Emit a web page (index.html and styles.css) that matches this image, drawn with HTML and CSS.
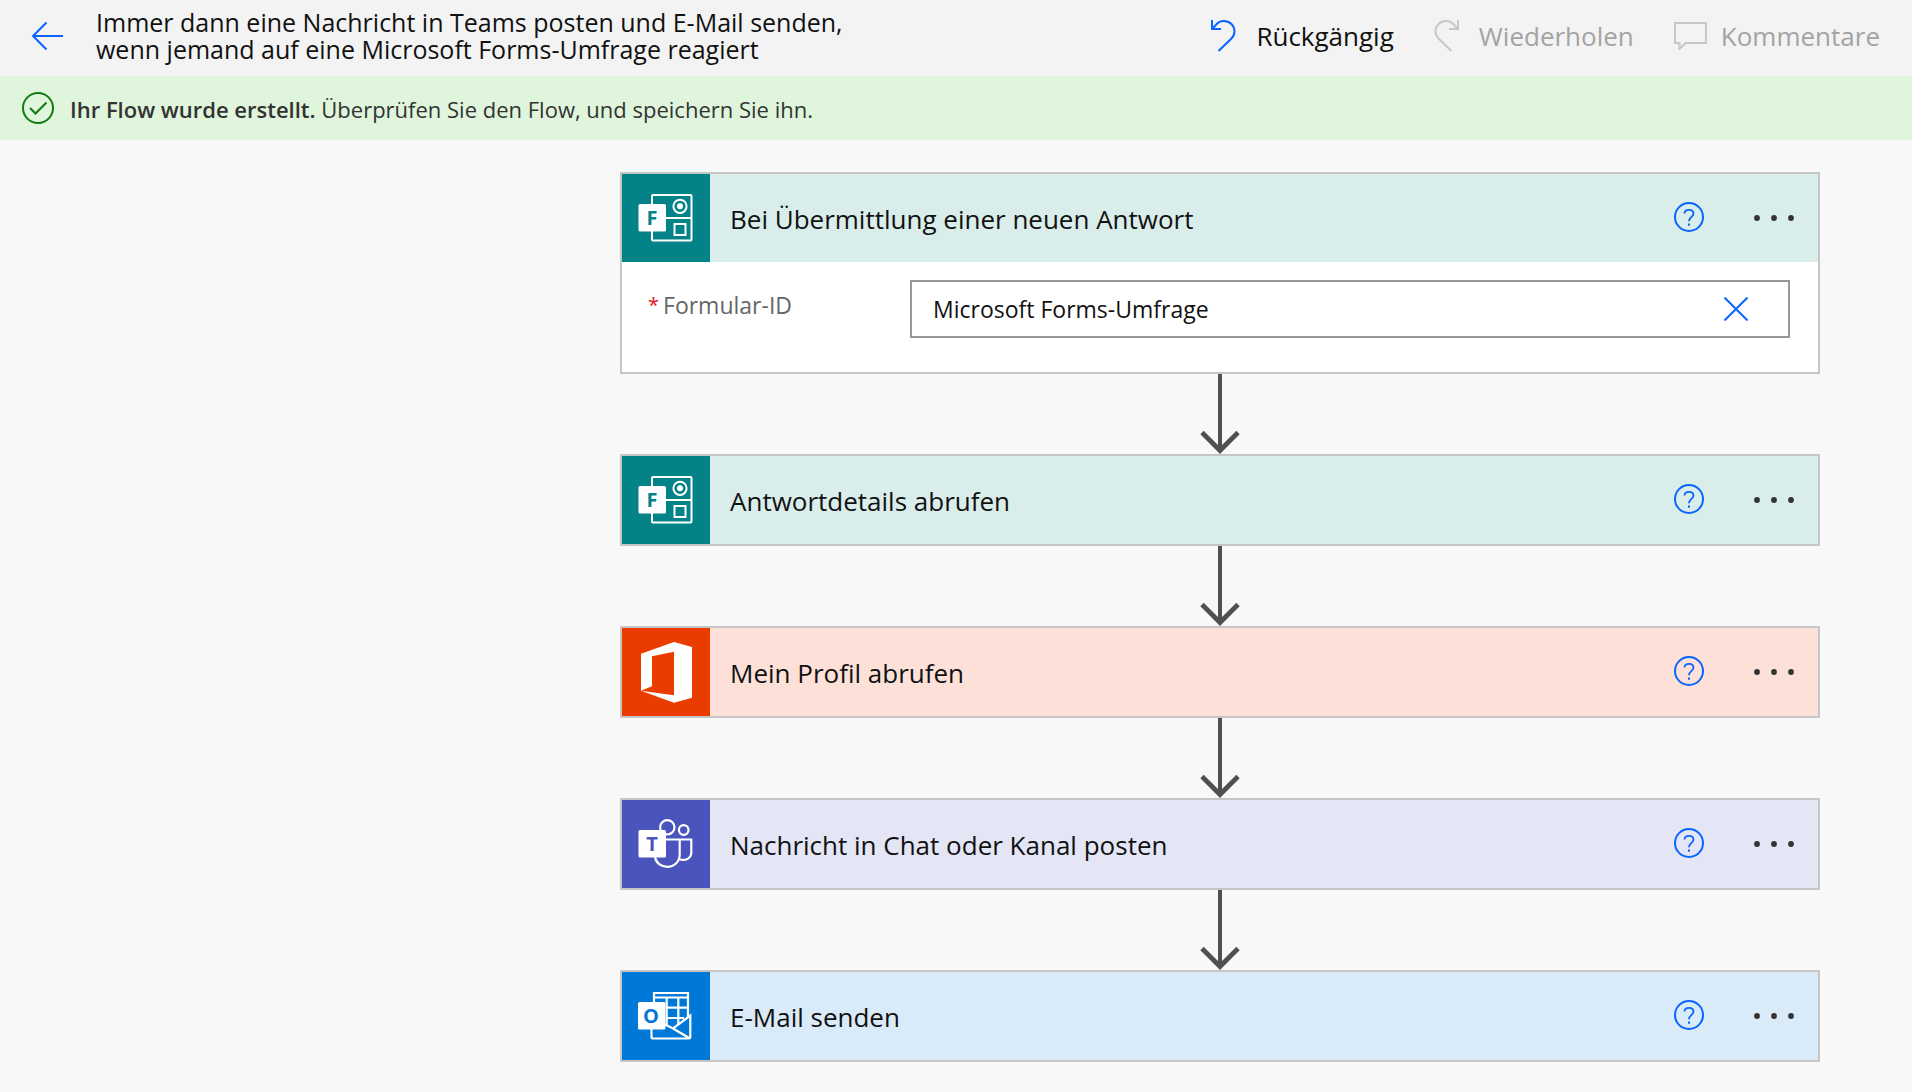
FILE: index.html
```html
<!DOCTYPE html>
<html lang="de">
<head>
<meta charset="utf-8">
<meta name="viewport" content="width=device-width, initial-scale=1">
<title>Flow bearbeiten</title>
<link rel="stylesheet" href="styles.css">
</head>
<body>
<svg class="defs" aria-hidden="true">
  <symbol id="help" viewBox="0 0 30 30">
    <circle cx="15" cy="15" r="14" fill="none" stroke="currentColor" stroke-width="2"/>
    <path d="M10.500 11.500C10.500 9 12.500 7.800 15 7.800C17.600 7.800 19.500 9.300 19.500 11.600C19.500 14.800 15 15 15 19.300" fill="none" stroke="currentColor" stroke-width="1.800"/>
    <rect x="14" y="21.500" width="2" height="2.200" fill="currentColor"/>
  </symbol>
  <symbol id="more" viewBox="0 0 40 6">
    <g fill="currentColor"><circle cx="3" cy="3" r="2.900"/><circle cx="20" cy="3" r="2.900"/><circle cx="37" cy="3" r="2.900"/></g>
  </symbol>
  <symbol id="arrow" viewBox="0 0 40 80">
    <path d="M20 0V76" fill="none" stroke="#505050" stroke-width="4"/>
    <path d="M2 58.500L20 76.500L38 58.500" fill="none" stroke="#505050" stroke-width="4.800"/>
  </symbol>
  <symbol id="forms" viewBox="0 0 88 88">
    <g fill="none" stroke="#fff" stroke-width="2">
      <path d="M30 31V22Q30 21 31 21H68.500Q69.500 21 69.500 22V65.500Q69.500 66.500 68.500 66.500H31Q30 66.500 30 65.500V57M44 44H69"/>
      <circle cx="58" cy="32.300" r="6.600"/>
      <rect x="52.500" y="50" width="11" height="11"/>
    </g>
    <circle cx="58" cy="32.300" r="3" fill="#fff"/>
    <rect x="16.500" y="30" width="27.500" height="27.500" rx="1.500" fill="#fff"/>
  </symbol>
</svg>

<header class="topbar">
  <button class="back" type="button" aria-label="Zurück">
    <svg width="32" height="28" viewBox="0 0 32 28" fill="none" stroke="currentColor" stroke-width="2"><path d="M32 14H2M15.500 .500L2 14L15.500 27.500"/></svg>
  </button>
  <h1 class="flow-title">Immer dann eine Nachricht in Teams posten und E-Mail senden,<br>wenn jemand auf eine Microsoft Forms-Umfrage reagiert</h1>
  <div class="tools">
    <button class="tool" type="button">
      <svg class="tool-icon undo" width="25" height="32" viewBox="0 0 25 32" fill="none" stroke="currentColor" stroke-width="2"><path d="M1 0V9H10M1.500 8.500L6 3.800C8 1.700 10 1 12.500 1C19 1 23.500 5.500 23.500 11.500C23.500 14.500 22 17 20 19L7.500 31"/></svg>
      Rückgängig
    </button>
    <button class="tool" type="button" disabled>
      <svg class="tool-icon" width="25" height="32" viewBox="0 0 25 32" fill="none" stroke="currentColor" stroke-width="2"><path d="M24 0V9H15M23.500 8.500L19 3.800C17 1.700 15 1 12.500 1C6 1 1.500 5.500 1.500 11.500C1.500 14.500 3 17 5 19L17.500 31"/></svg>
      Wiederholen
    </button>
    <button class="tool comments" type="button" disabled>
      <svg class="tool-icon" width="33" height="28" viewBox="0 0 33 28" fill="none" stroke="currentColor" stroke-width="2"><path d="M1 1H32V21H11.500L5.500 27V21H1Z"/></svg>
      Kommentare
    </button>
  </div>
</header>

<div class="banner" role="status">
  <svg width="32" height="32" viewBox="0 0 32 32" fill="none" stroke="#107c10" stroke-width="2"><circle cx="16" cy="16" r="15"/><path d="M8 16L13.500 21.500L24.500 10.500"/></svg>
  <p class="banner-text"><strong>Ihr Flow wurde erstellt.</strong> Überprüfen Sie den Flow, und speichern Sie ihn.</p>
</div>

<main class="canvas">
  <div class="flow">
    <section class="card">
      <div class="card-head forms">
        <svg class="logo" viewBox="0 0 88 88"><use href="#forms"/><text class="glyph" x="30" y="51" fill="#038387">F</text></svg>
        <h2 class="card-title">Bei Übermittlung einer neuen Antwort</h2>
        <button class="icon-button help" type="button" aria-label="Hilfe"><svg width="30" height="30"><use href="#help"/></svg></button>
        <button class="icon-button more" type="button" aria-label="Mehr"><svg width="40" height="6"><use href="#more"/></svg></button>
      </div>
      <div class="card-body">
        <label class="label" for="form-id"><span class="required">*</span>Formular-ID</label>
        <div class="field">
          <input class="input" id="form-id" type="text" value="Microsoft Forms-Umfrage">
          <button class="icon-button clear" type="button" aria-label="Löschen"><svg width="24" height="24" viewBox="0 0 24 24" fill="none" stroke="currentColor" stroke-width="2"><path d="M.500 .500L23.500 23.500M23.500 .500L.500 23.500"/></svg></button>
        </div>
      </div>
    </section>
    <svg class="arrow"><use href="#arrow"/></svg>

    <section class="card">
      <div class="card-head forms">
        <svg class="logo" viewBox="0 0 88 88"><use href="#forms"/><text class="glyph" x="30" y="51" fill="#038387">F</text></svg>
        <h2 class="card-title">Antwortdetails abrufen</h2>
        <button class="icon-button help" type="button" aria-label="Hilfe"><svg width="30" height="30"><use href="#help"/></svg></button>
        <button class="icon-button more" type="button" aria-label="Mehr"><svg width="40" height="6"><use href="#more"/></svg></button>
      </div>
    </section>
    <svg class="arrow"><use href="#arrow"/></svg>

    <section class="card">
      <div class="card-head office">
        <svg class="logo" viewBox="0 0 88 88"><path fill="#fff" d="M19 25.700L52 14L70 19V69.700L52 74.700L19 62.700L52 67.300V23.700L30 28.300V58.300L19 62.700Z"/></svg>
        <h2 class="card-title">Mein Profil abrufen</h2>
        <button class="icon-button help" type="button" aria-label="Hilfe"><svg width="30" height="30"><use href="#help"/></svg></button>
        <button class="icon-button more" type="button" aria-label="Mehr"><svg width="40" height="6"><use href="#more"/></svg></button>
      </div>
    </section>
    <svg class="arrow"><use href="#arrow"/></svg>

    <section class="card">
      <div class="card-head teams">
        <svg class="logo" viewBox="0 0 88 88">
          <g fill="none" stroke="#fff" stroke-width="2.200">
            <circle cx="45.300" cy="27.300" r="7.200"/>
            <circle cx="61.700" cy="30" r="4.800"/>
            <path d="M44 39.500H69.300V52.500C69.300 58.500 63 61.500 57 59M57.700 39.500V54.500C57.700 62 52 66.800 45.300 66.800C39 66.800 34 63 33 57"/>
          </g>
          <rect x="16.500" y="30" width="27.500" height="27.500" rx="1.500" fill="#fff"/>
          <text class="glyph" x="30" y="51" fill="#4b53bc">T</text>
        </svg>
        <h2 class="card-title">Nachricht in Chat oder Kanal posten</h2>
        <button class="icon-button help" type="button" aria-label="Hilfe"><svg width="30" height="30"><use href="#help"/></svg></button>
        <button class="icon-button more" type="button" aria-label="Mehr"><svg width="40" height="6"><use href="#more"/></svg></button>
      </div>
    </section>
    <svg class="arrow"><use href="#arrow"/></svg>

    <section class="card">
      <div class="card-head outlook">
        <svg class="logo" viewBox="0 0 88 88">
          <g fill="none" stroke="#fff" stroke-width="2.200">
            <path d="M32 31V21H66V45M32 25.500H66M44.700 25.500V53M56.300 25.500V53M44 35.700H66M44 46H62"/>
            <path d="M29.500 57V65.500Q29.500 66.500 30.500 66.500H67Q68.300 66.500 68.300 65.500V43.500L51 56.500L43 52.500M51 56.500L68 66.500"/>
          </g>
          <rect x="16" y="30" width="27.500" height="27.500" rx="1.500" fill="#fff"/>
          <text class="glyph" x="29" y="51" fill="#0078d7">O</text>
        </svg>
        <h2 class="card-title">E-Mail senden</h2>
        <button class="icon-button help" type="button" aria-label="Hilfe"><svg width="30" height="30"><use href="#help"/></svg></button>
        <button class="icon-button more" type="button" aria-label="Mehr"><svg width="40" height="6"><use href="#more"/></svg></button>
      </div>
    </section>
  </div>
</main>
</body>
</html>
```

FILE: styles.css
```css
* {
  box-sizing: border-box;
}

body {
  margin: 0;
  background: #f8f8f8;
  color: #111;
  font-family: "Segoe UI", "Open Sans", "Noto Sans", sans-serif;
}

button {
  padding: 0;
  border: 0;
  background: none;
  color: inherit;
  font: inherit;
}

svg {
  display: block;
  flex: none;
}

.defs {
  position: absolute;
  width: 0;
  height: 0;
}

.topbar {
  display: flex;
  align-items: center;
  min-height: 76px;
  padding: 0 32px 4px 31px;
  background: #f3f3f3;
}

.back {
  margin-right: 33px;
  color: #0a64ff;
}

.flow-title {
  flex: 1;
  margin: 0;
  font-size: 25px;
  font-weight: 400;
  line-height: 27px;
}

.tools {
  display: flex;
  gap: 40px;
}

.tool {
  display: flex;
  align-items: center;
  gap: 20px;
  font-size: 26px;
  line-height: 36px;
}

.comments {
  gap: 14px;
}

.tool:disabled {
  color: #a3a3a3;
}

.tool:disabled .tool-icon {
  color: #c8c8c8;
}

.undo {
  color: #0a64ff;
}

.banner {
  display: flex;
  align-items: center;
  gap: 16px;
  min-height: 64px;
  padding: 0 22px;
  background: #dff5dc;
  color: #333;
}

.banner-text {
  margin: 0;
  padding-top: 2px;
  font-size: 22px;
  line-height: 32px;
}

.banner-text strong {
  font-weight: 600;
}

.canvas {
  display: flex;
  justify-content: flex-end;
  padding: 32px 92px 30px 32px;
}

.flow {
  display: flex;
  flex: 0 1 1200px;
  flex-direction: column;
  align-items: center;
}

.card {
  width: 100%;
  border: 2px solid #c6c6c6;
  background: #fff;
}

.card-head {
  display: flex;
  align-items: center;
  min-height: 88px;
  padding-right: 24px;
}

.logo {
  width: 88px;
  height: 88px;
}

.glyph {
  font-family: "Segoe UI", "Open Sans", sans-serif;
  font-size: 20px;
  font-weight: 700;
  text-anchor: middle;
}

.forms {
  background: #d9edeb;
}

.forms .logo {
  background: #038387;
}

.office {
  background: #fde1d9;
}

.office .logo {
  background: #eb3c00;
}

.teams {
  background: #e4e5f5;
}

.teams .logo {
  background: #4b53bc;
}

.outlook {
  background: #d9eaf9;
}

.outlook .logo {
  background: #0078d7;
}

.card-title {
  flex: 1;
  margin: 0;
  padding: 2px 0 0 20px;
  font-size: 26px;
  font-weight: 400;
  line-height: 36px;
}

.icon-button {
  color: #0a64ff;
}

.help {
  padding-bottom: 2px;
}

.more {
  margin-left: 50px;
  color: #333;
}

.card-body {
  display: flex;
  align-items: flex-start;
  padding: 18px 28px 34px 26px;
}

.label {
  display: flex;
  flex: 0 0 262px;
  gap: 4px;
  padding-top: 9px;
  color: #666;
  font-size: 23px;
  line-height: 32px;
}

.required {
  color: #e81123;
  font-size: 20px;
}

.field {
  display: flex;
  flex: 1;
  align-items: center;
  height: 58px;
  padding: 0 40px 0 21px;
  border: 2px solid #979797;
}

.input {
  flex: 1;
  min-width: 0;
  padding: 0;
  border: 0;
  outline: 0;
  background: none;
  color: #111;
  font: inherit;
  font-size: 23px;
  line-height: 32px;
}

.arrow {
  width: 40px;
  height: 80px;
}
```
